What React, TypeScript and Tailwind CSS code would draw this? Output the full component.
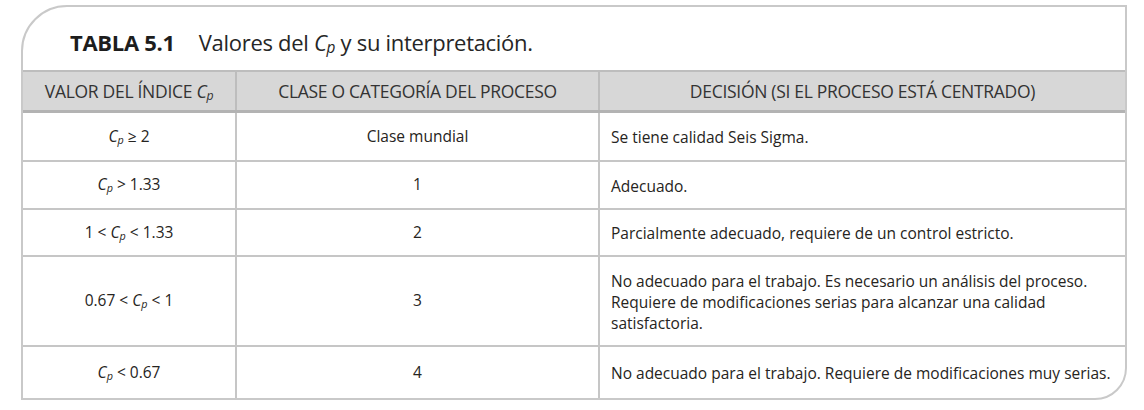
import React from "react";

const font = { fontFamily: '"Open Sans", "Noto Sans", sans-serif' };

// Cp with italic subscript p
function Cp() {
  return (
    <span>
      <span className="italic">C</span>
      <sub className="italic text-[0.7em] relative top-[2px]">p</sub>
    </span>
  );
}

type Row = { valor: React.ReactNode; clase: string; decision: string; h: string };

const rows: Row[] = [
  { valor: <><Cp /> ≥ 2</>, clase: "Clase mundial", decision: "Se tiene calidad Seis Sigma.", h: "h-[49px]" },
  { valor: <><Cp /> &gt; 1.33</>, clase: "1", decision: "Adecuado.", h: "h-[48px]" },
  { valor: <>1 &lt; <Cp /> &lt; 1.33</>, clase: "2", decision: "Parcialmente adecuado, requiere de un control estricto.", h: "h-[47px]" },
  {
    valor: <>0.67 &lt; <Cp /> &lt; 1</>,
    clase: "3",
    decision:
      "No adecuado para el trabajo. Es necesario un análisis del proceso. Requiere de modificaciones serias para alcanzar una calidad satisfactoria.",
    h: "h-[90px]",
  },
  { valor: <><Cp /> &lt; 0.67</>, clase: "4", decision: "No adecuado para el trabajo. Requiere de modificaciones muy serias.", h: "h-[51px]" },
];

export default function App() {
  return (
    <div className="w-[1144px] h-[410px] bg-white pt-[5px] pl-[21px]" style={font}>
      <div className="w-[1106px] border-2 border-[#c9c9c9] rounded-tl-[46px] rounded-br-[32px] overflow-hidden bg-white text-[#262421]">
        {/* title */}
        <div className="h-[63px] flex items-center pl-[47px] pt-[7px] text-[22px] tracking-[-0.3px]">
          <span className="font-bold text-[#1d1d1d]">TABLA 5.1</span>
          <span className="ml-[24px] text-[#262626]">
            Valores del <Cp /> y su interpretación.
          </span>
        </div>

        {/* header */}
        <div className="grid grid-cols-[214px_363px_1fr] bg-[#d7d7d7] border-t-2 border-b-[3px] border-t-[#bdbdbd] border-b-[#b3b3b3] h-[43px] text-[17.5px] text-[#333] tracking-[-0.3px]">
          <div className="flex items-center justify-center border-r-2 border-[#bdbdbd]">
            <span>
              VALOR DEL ÍNDICE <Cp />
            </span>
          </div>
          <div className="flex items-center justify-center border-r-2 border-[#bdbdbd]">CLASE O CATEGORÍA DEL PROCESO</div>
          <div className="flex items-center justify-center">DECISIÓN (SI EL PROCESO ESTÁ CENTRADO)</div>
        </div>

        {/* body */}
        {rows.map((r, i) => (
          <div
            key={i}
            className={`grid grid-cols-[214px_363px_1fr] text-[15.5px] ${r.h} ${i < rows.length - 1 ? "border-b-2 border-[#c6c6c6]" : ""}`}
          >
            <div className="flex items-center justify-center border-r-2 border-[#c6c6c6]">
              <span>{r.valor}</span>
            </div>
            <div className="flex items-center justify-center border-r-2 border-[#c6c6c6]">{r.clase}</div>
            <div className="flex items-center pl-[11px] pr-[6px] pt-[2px] leading-[21px]">{r.decision}</div>
          </div>
        ))}
      </div>
    </div>
  );
}
